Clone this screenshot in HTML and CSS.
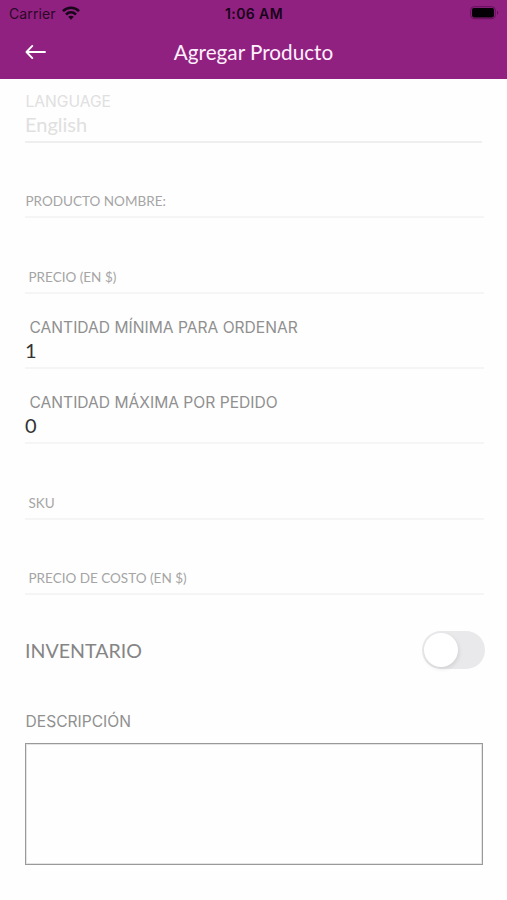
FILE: index.html
```html
<!DOCTYPE html>
<html lang="es">
<head>
<meta charset="utf-8">
<title>Agregar Producto</title>
<link rel="stylesheet" href="styles.css">
</head>
<body>
<header class="header">
  <div class="status">
    <div class="carrier"><span>Carrier</span>
      <svg class="wifi" width="18" height="14" viewBox="0 0 18 14" fill="none" stroke="#18061a" stroke-width="2.6">
        <path d="M1 5.1C5.6.6 12.4.6 17 5.1"/>
        <path d="M4 8.5c3-2.8 7-2.8 10 0"/>
        <path d="M6.2 10.8c1.7-1.5 3.9-1.5 5.6 0L9 13.7Z" fill="#18061a" stroke="none"/>
      </svg>
    </div>
    <span class="clock">1:06 AM</span>
    <svg class="battery" width="29" height="14" viewBox="0 0 29 14">
      <rect x=".7" y=".7" width="24.6" height="12" rx="3.4" fill="none" stroke="#631159"/>
      <rect x="2" y="2" width="22" height="9.4" rx="1.8" fill="#050005"/>
      <path d="M27 4.7c1.8.6 1.8 3.4 0 4Z" fill="#631159"/>
    </svg>
  </div>
  <div class="nav">
    <svg class="back" width="22" height="16" viewBox="0 0 22 16" fill="none" stroke="#fff" stroke-width="1.9" stroke-linecap="round" stroke-linejoin="round">
      <path d="M20 8H1.6M7.3 1.9 1.5 8l5.8 6.1"/>
    </svg>
    <h1 class="title">Agregar Producto</h1>
  </div>
</header>
<main class="form">
  <div class="field field-disabled">
    <span class="label label-language">LANGUAGE</span>
    <span class="value">English</span>
  </div>
  <div class="field"><span class="placeholder flush">PRODUCTO NOMBRE:</span></div>
  <div class="field"><span class="placeholder">PRECIO (EN $)</span></div>
  <div class="field">
    <span class="label">CANTIDAD MÍNIMA PARA ORDENAR</span>
    <span class="value">1</span>
  </div>
  <div class="field">
    <span class="label">CANTIDAD MÁXIMA POR PEDIDO</span>
    <span class="value">0</span>
  </div>
  <div class="field"><span class="placeholder">SKU</span></div>
  <div class="field"><span class="placeholder">PRECIO DE COSTO (EN $)</span></div>
  <div class="inventory">
    <span class="inventory-label">INVENTARIO</span>
    <span class="switch" role="switch" aria-checked="false"><span class="knob"></span></span>
  </div>
  <div class="label label-description">DESCRIPCIÓN</div>
  <div class="description" role="textbox"></div>
</main>
</body>
</html>
```
FILE: styles.css
```css
* { box-sizing: border-box; }
body {
  margin: 0;
  height: 900px;
  overflow: hidden;
  background: #fefefe;
  font-family: Lato, sans-serif;
}
.header {
  height: 79px;
  background: #912180;
}
.status {
  display: grid;
  grid-template-columns: 1fr auto 1fr;
  align-items: center;
  height: 28px;
  padding: 0 8px 0 9px;
  font-family: Inter, sans-serif;
  font-size: 14px;
  line-height: 28px;
  color: #2a0826;
}
.carrier {
  display: flex;
  align-items: center;
  gap: 6px;
  letter-spacing: 0.1px;
}
.wifi { margin-top: -2px; }
.clock {
  font-weight: 600;
  letter-spacing: 0.4px;
  color: #18031a;
}
.battery { justify-self: end; margin-top: -2px; }
.nav {
  display: grid;
  grid-template-columns: 1fr auto 1fr;
  align-items: center;
  height: 48px;
  padding: 0 25px;
}
.title {
  margin: 0;
  font-size: 20.7px;
  font-weight: 400;
  line-height: 26px;
  color: #fff0fc;
}
.form { padding: 0 24px 0 25px; }
.field {
  display: flex;
  flex-direction: column;
  justify-content: flex-end;
  height: 75.33px;
  width: 459px;
  border-bottom: 2px solid #f5f5f5;
}
.field-disabled {
  width: 457px;
  height: 64px;
  border-bottom-color: #efefef;
}
.label {
  padding-left: 0.5px;
  font-family: Inter, sans-serif;
  font-size: 15.6px;
  line-height: 20px;
  color: #909090;
  white-space: nowrap;
}
.field .label { padding-left: 4.5px; }
.field .label-language { padding-left: 0.5px; }
.value {
  height: 29px;
  font-size: 20px;
  line-height: 24px;
  color: #333;
}
.field-disabled .label,
.field-disabled .value { color: #e0e0e0; }
.placeholder {
  padding-left: 3.5px;
  margin-bottom: 5px;
  font-size: 13.5px;
  line-height: 20px;
  color: #a5a5a5;
}
.flush { padding-left: 0.5px; }
.inventory {
  display: flex;
  align-items: center;
  justify-content: space-between;
  width: 460px;
  height: 38px;
  margin-top: 36px;
}
.inventory-label {
  padding-top: 2px;
  font-size: 19.6px;
  color: #858585;
}
.switch {
  display: flex;
  width: 63px;
  height: 38px;
  padding: 2px;
  border-radius: 19px;
  background: #e9e9eb;
}
.knob {
  width: 34px;
  height: 34px;
  border-radius: 50%;
  background: #fff;
  box-shadow: 1px 2px 4px rgba(0, 0, 0, 0.1);
}
.label-description { margin-top: 43px; }
.description {
  width: 458px;
  height: 122px;
  margin-top: 11px;
  border: 1px solid #999;
  box-shadow: inset 0 0 0 1px #e4e4e4;
}
```
